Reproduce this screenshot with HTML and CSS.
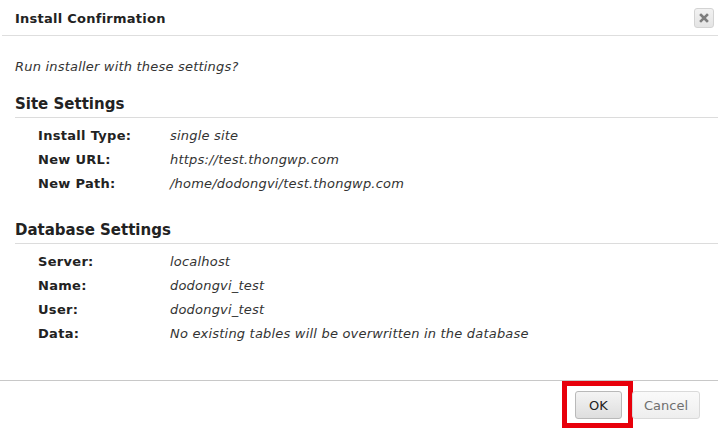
FILE: index.html
```html
<!DOCTYPE html>
<html lang="en">
<head>
<meta charset="utf-8">
<title>Install Confirmation</title>
<link rel="stylesheet" href="styles.css">
</head>
<body>
<div class="dialog">
  <div class="dialog-header">
    <span class="dialog-title">Install Confirmation</span>
    <button class="close-btn" aria-label="Close">
      <svg width="10" height="10" viewBox="0 0 10 10"><path d="M2 2 L8 8 M8 2 L2 8" stroke="#7e7e7e" stroke-width="2.6" stroke-linecap="square"/></svg>
    </button>
  </div>
  <div class="dialog-body">
    <p class="prompt">Run installer with these settings?</p>
    <h3 class="section-title">Site Settings</h3>
    <div class="settings">
      <div class="label">Install Type:</div><div class="value">single site</div>
      <div class="label">New URL:</div><div class="value">https://test.thongwp.com</div>
      <div class="label">New Path:</div><div class="value">/home/dodongvi/test.thongwp.com</div>
    </div>
    <h3 class="section-title db">Database Settings</h3>
    <div class="settings">
      <div class="label">Server:</div><div class="value">localhost</div>
      <div class="label">Name:</div><div class="value">dodongvi_test</div>
      <div class="label">User:</div><div class="value">dodongvi_test</div>
      <div class="label">Data:</div><div class="value">No existing tables will be overwritten in the database</div>
    </div>
  </div>
  <div class="dialog-footer">
    <span class="highlight"><button class="btn btn-ok">OK</button></span>
    <button class="btn btn-cancel">Cancel</button>
  </div>
</div>
</body>
</html>
```
FILE: styles.css
```css
html, body {
  margin: 0;
  padding: 0;
  background: #ffffff;
}
body {
  font-family: "DejaVu Sans", Verdana, sans-serif;
  font-size: 13px;
  color: #222;
  letter-spacing: 0.2px;
}
.dialog {
  height: 433px;
  display: flex;
  flex-direction: column;
  overflow: hidden;
}
.dialog-header {
  height: 36px;
  margin: 0 2px;
  padding: 0 4px 0 13px;
  border-bottom: 1px solid #dedede;
  display: flex;
  align-items: center;
  justify-content: space-between;
  box-sizing: border-box;
}
.dialog-title {
  font-weight: bold;
  font-size: 13px;
  letter-spacing: 0.25px;
  color: #222;
  padding-top: 1px;
}
.close-btn {
  width: 20px;
  height: 20px;
  padding: 0;
  margin: 0;
  border: 1px solid #d3d3d3;
  border-radius: 3px;
  background: linear-gradient(#f2f2f2, #e4e4e4);
  display: flex;
  align-items: center;
  justify-content: center;
}
.dialog-body {
  flex: 1;
  padding: 21px 2px 0 15px;
}
.prompt {
  margin: 0;
  line-height: 20px;
  font-style: italic;
  color: #333;
}
.section-title {
  margin: 17px 0 0 0;
  font-size: 15px;
  letter-spacing: 0;
  line-height: 20px;
  font-weight: bold;
  color: #222;
  padding-bottom: 3px;
  border-bottom: 1px solid #dcdcdc;
}
.section-title.db {
  margin-top: 24px;
}
.settings {
  display: grid;
  grid-template-columns: 132px 1fr;
  padding: 6px 0 0 23px;
  line-height: 24px;
}
.label {
  font-weight: bold;
  letter-spacing: 0.3px;
  color: #222;
}
.value {
  font-style: italic;
  color: #333;
}
.dialog-footer {
  height: 53px;
  box-sizing: border-box;
  border-top: 1px solid #c8c8c8;
  margin-right: 2px;
  padding: 10px 18px 0 0;
  display: flex;
  justify-content: flex-end;
  align-items: flex-start;
  gap: 10px;
}
.highlight {
  display: block;
  box-sizing: border-box;
  height: 47px;
  margin: -10px -11px 0 -13px;
  padding: 5px 6px 0 8px;
  border: 5px solid #e8000b;
}
.btn {
  display: block;
  height: 28px;
  font-family: "DejaVu Sans", Verdana, sans-serif;
  font-size: 13px;
  border-radius: 3px;
  padding: 0;
}
.btn-ok {
  width: 47px;
  color: #222;
  border: 1px solid #b9b9b9;
  background: linear-gradient(#f4f4f4, #dedede);
}
.btn-cancel {
  width: 68px;
  color: #6f6f6f;
  border: 1px solid #dadada;
  background: linear-gradient(#fafafa, #eeeeee);
}
```
